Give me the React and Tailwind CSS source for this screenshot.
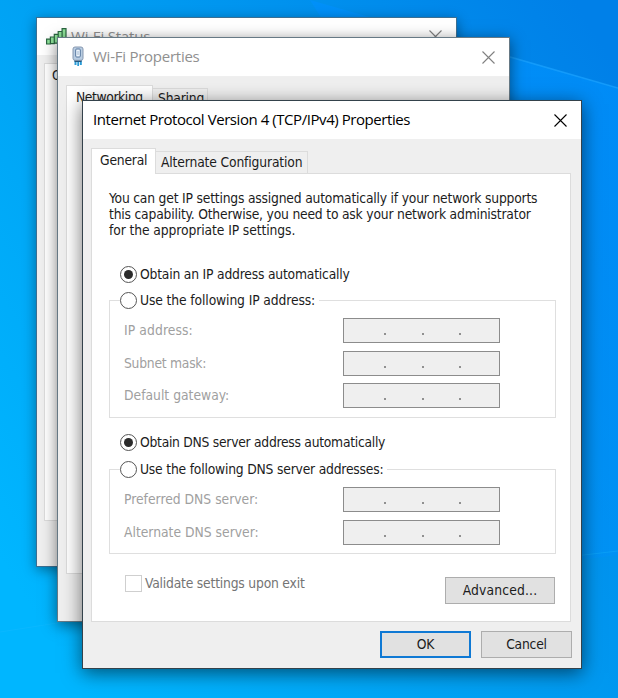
import React from "react";

function Close({ className }) {
  return (
    <svg className={className} width="13" height="13" viewBox="0 0 13 13" fill="none" stroke="currentColor" strokeWidth="1.1">
      <path d="M.5.5l12 12M12.5.5l-12 12" />
    </svg>
  );
}

function SignalIcon() {
  return (
    <svg className="shrink-0" width="21" height="17" viewBox="0 0 21 17" fill="#8fe39a" stroke="#2b6640" strokeWidth="1.2">
      <path d="M.6 11.2h3.8v4.8H.6zM4.4 9h3.9v6.6H4.4zM8.3 6.4h3.9v8.8H8.3zM12.2 3.5h3.9v11.3h-3.9zM16.1.7H20v13.7h-3.9z" />
    </svg>
  );
}

function AdapterIcon() {
  return (
    <svg className="mb-[2px] shrink-0" width="12" height="20" viewBox="0 0 12 20" fill="none">
      <path d="M2.5 14h2v5h-2zM5.3 14h1.7v6H5.3zM7.8 14h2v5h-2z" fill="#2a9bd6" />
      <path d="M2.5 14h7v2h-7z" fill="#24577f" />
      <rect x="1" y="1" width="10" height="13.3" rx="2" fill="#b9cde2" stroke="#8798b0" />
      <rect x="3.7" y="3" width="4.6" height="8" rx="1" fill="#eef5fc" stroke="#56769e" />
      <path d="M6 5v4" stroke="#9fb6d0" />
    </svg>
  );
}

function Radio({ checked, children, className }) {
  return (
    <div className={"flex h-4 items-center " + className}>
      <span className="flex size-[17px] shrink-0 items-center justify-center rounded-full border-[1.5px] border-[#555] bg-white">
        {checked && <span className="size-[9px] rounded-full bg-[#2b2b2b]" />}
      </span>
      <span className="ml-[3px] whitespace-nowrap leading-4">{children}</span>
    </div>
  );
}

function IpField({ label, tracking }) {
  return (
    <div className="flex h-[25px] items-center text-[#a0a0a0]">
      <span className={"w-[219px] whitespace-nowrap " + tracking}>{label}</span>
      <div className="flex h-[25px] w-[157px] items-end gap-[35.5px] border-[1.5px] border-[#8c8c8c] bg-[#efefef] pb-[7px] pl-[40px]">
        <i className="h-[2px] w-[2px] bg-[#909090]" />
        <i className="h-[2px] w-[2px] bg-[#909090]" />
        <i className="h-[2px] w-[2px] bg-[#909090]" />
      </div>
    </div>
  );
}

function Desktop() {
  return (
    <svg className="absolute inset-0" width="618" height="698" viewBox="0 0 618 698">
      <defs>
        <linearGradient id="sky" x1="0" y1="0.8" x2="1" y2="0.1">
          <stop offset="0" stopColor="#00b6ff" />
          <stop offset="0.45" stopColor="#009ff2" />
          <stop offset="1" stopColor="#0080e8" />
        </linearGradient>
        <linearGradient id="beam" x1="0" y1="0" x2="0" y2="1">
          <stop offset="0" stopColor="#0090fc" stopOpacity="0.75" />
          <stop offset="1" stopColor="#0090fc" stopOpacity="0.4" />
        </linearGradient>
      </defs>
      <rect width="618" height="698" fill="url(#sky)" />
      <path d="M310 0L618 88V555L500 570V300z" fill="url(#beam)" />
      <path d="M500 54L618 88" stroke="#1ca3ff" strokeWidth="1.6" opacity=".7" />
      <path d="M575 556L618 551M0 632L70 621" stroke="#20bcff" strokeWidth="1.2" opacity=".3" />
    </svg>
  );
}

export default function App() {
  return (
    <div className="relative h-[698px] w-[618px] overflow-hidden bg-[#009cf5] font-['DejaVu_Sans_Condensed','DejaVu_Sans',sans-serif] text-[13.75px] tracking-[-0.2px] text-[#1c1c1c]">
      <Desktop />

      <section className="absolute isolate top-[17px] left-[36px] flex h-[550px] w-[421px] flex-col border border-[#3c6f92] bg-[#efefef] shadow-[0_3px_12px_rgba(0,0,0,0.4)]">
        <header className="flex h-[37px] shrink-0 items-center bg-white pr-[14px] pl-[9px] font-['Open_Sans',sans-serif] text-[15px] text-[#909090]">
          <SignalIcon />
          <span className="-mt-px ml-[4px] grow">Wi-Fi Status</span>
          <Close className="text-[#808080]" />
        </header>
        <div className="mt-[8px] ml-[7px] h-[458px] w-[400px] border border-[#dcdcdc] bg-white pt-px pl-[7px]">General</div>
      </section>

      <section className="absolute isolate top-[37px] left-[57px] flex h-[585px] w-[453px] flex-col border border-[#667985] bg-[#efefef] shadow-[0_3px_14px_rgba(0,0,0,0.5)]">
        <header className="flex h-[38px] shrink-0 items-center bg-white pr-[14px] pl-[14px] font-['Open_Sans',sans-serif] text-[15px] tracking-[-0.25px] text-[#909090]">
          <AdapterIcon />
          <span className="-mt-[2px] ml-[9px] grow">Wi-Fi Properties</span>
          <Close className="text-[#808080]" />
        </header>
        <div className="mt-[9px] ml-[8px] flex h-[25px] items-end">
          <div className="z-10 h-[25px] w-[87px] border border-b-0 border-[#dcdcdc] bg-white pt-px pl-[9px] tracking-[-0.4px]">Networking</div>
          <div className="h-[22px] w-[55px] border border-l-0 border-[#dcdcdc] pl-[5px] leading-[18px]">Sharing</div>
        </div>
        <div className="ml-[8px] h-[464px] w-[434px] border border-t-0 border-[#dcdcdc] bg-white" />
      </section>

      <section className="absolute isolate top-[100px] left-[82px] flex h-[569px] w-[500px] flex-col border border-[#34424b] bg-[#efefef] shadow-[0_4px_18px_rgba(0,0,0,0.55)]">
        <header className="flex h-[38px] shrink-0 items-center bg-white pr-[14px] pl-[10px] font-['Open_Sans',sans-serif] text-[15px] tracking-[-0.44px] text-black">
          <span className="-mt-[2px] grow">Internet Protocol Version 4 (TCP/IPv4) Properties</span>
          <Close className="text-black" />
        </header>

        <div className="mt-[9px] ml-[8px] flex h-[25px] shrink-0 items-end">
          <div className="relative z-10 -mb-px h-[26px] w-[65px] border border-b-0 border-[#dcdcdc] bg-white pt-[2px] pl-[8px] leading-[18px]">General</div>
          <div className="h-[22px] w-[152px] border border-b-0 border-l-0 border-[#dcdcdc] pt-px pl-[5px] leading-[18px] tracking-[-0.15px] whitespace-nowrap">Alternate Configuration</div>
        </div>

        <main className="ml-[8px] h-[449px] w-[480px] shrink-0 border border-[#dcdcdc] bg-white pt-[16px] pl-[17px]">
          <p className="h-[49px] leading-[16.2px] whitespace-nowrap">
            You can get IP settings assigned automatically if your network supports<br />
            this capability. Otherwise, you need to ask your network administrator<br />
            <span className="tracking-[-0.1px]">for the appropriate IP settings.</span>
          </p>

          <Radio checked className="mt-[27px] ml-[11px]">Obtain an IP address automatically</Radio>
          <fieldset className="mt-[10px] h-[126px] w-[447px] border-[1.5px] border-[#dfdfdf] pl-[14px]">
            <legend className="-ml-[4px] pr-[4px]">
              <Radio className="tracking-[-0.12px]">Use the following IP address:</Radio>
            </legend>
            <div className="mt-[10px] flex flex-col gap-[7.5px]">
              <IpField label="IP address:" tracking="tracking-[0.1px]" />
              <IpField label="Subnet mask:" tracking="tracking-[-0.25px]" />
              <IpField label="Default gateway:" tracking="tracking-normal" />
            </div>
          </fieldset>

          <Radio checked className="mt-[16px] ml-[11px] tracking-[-0.27px]">Obtain DNS server address automatically</Radio>
          <fieldset className="mt-[11px] h-[93px] w-[447px] border-[1.5px] border-[#dfdfdf] pl-[14px]">
            <legend className="-ml-[4px] pr-[4px]">
              <Radio className="">Use the following DNS server addresses:</Radio>
            </legend>
            <div className="mt-[10px] flex flex-col gap-[7.5px]">
              <IpField label="Preferred DNS server:" tracking="tracking-normal" />
              <IpField label="Alternate DNS server:" tracking="tracking-normal" />
            </div>
          </fieldset>

          <div className="mt-[21px] flex w-[446px] items-start justify-between pl-[16px]">
            <label className="flex items-center leading-[17px] text-[#747474]">
              <span className="mr-[3px] size-[17px] border-[1.5px] border-[#cfcfcf] bg-white" />
              Validate settings upon exit
            </label>
            <button className="mt-[2px] h-[27px] w-[110px] border-[1.5px] border-[#adadad] bg-[#e1e1e1] tracking-[0.15px]">Advanced...</button>
          </div>
        </main>

        <footer className="mt-[9px] flex justify-end gap-[10px] pr-[9px]">
          <button className="h-[27px] w-[91px] border-2 border-[#0f79d4] bg-[#e1e1e1]">OK</button>
          <button className="h-[27px] w-[91px] border-[1.5px] border-[#adadad] bg-[#e1e1e1]">Cancel</button>
        </footer>
      </section>
    </div>
  );
}
